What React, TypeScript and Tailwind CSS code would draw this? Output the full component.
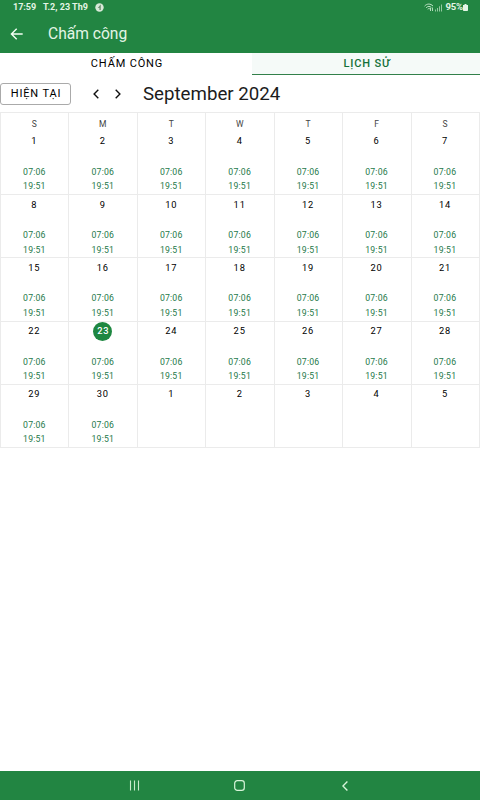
import { useState } from "react";
import clsx from "clsx";

interface Day {
  date: number;
  checkIn?: string;
  checkOut?: string;
  today?: boolean;
}

const weekdays = ["S", "M", "T", "W", "T", "F", "S"];

// 30 days of September followed by the first days of October
const days: Day[] = Array.from({ length: 35 }, (_, i) =>
  i < 30
    ? { date: i + 1, checkIn: "07:06", checkOut: "19:51", today: i === 22 }
    : { date: i - 29 }
);

const weeks = [0, 1, 2, 3, 4].map((w) => days.slice(w * 7, w * 7 + 7));

const StatusBar = () => (
  <div className="flex h-[14px] items-center justify-between pl-[13px] pr-[12px] text-[9px] leading-[14px] font-bold text-[#e4f5e6]">
    <div className="flex items-center">
      <span className="w-[30px] text-[9px]">17:59</span>
      <span className="w-[52px] whitespace-nowrap">T.2, 23 Th9</span>
      <svg width="9" height="9" viewBox="0 0 9 9">
        <circle cx="4.5" cy="4.5" r="4.2" fill="#d8e9d8" />
        <path d="M5.3 1.8 2.8 4.9h1.6v2h1.4V1.8z" fill="#6d8f72" />
      </svg>
    </div>
    <div className="flex items-center">
      <svg width="20" height="9" viewBox="0 0 20 9" fill="none" stroke="#c4e5ca">
        <path d="M.6 3.1C3 .4 6.6.4 9 3.1M2.2 4.7c1.6-1.7 3.8-1.7 5.2 0M3.7 6.2c.8-.8 1.7-.8 2.5 0" />
        <path d="M6.5 8V5M8.5 8V4.5" strokeWidth=".9" />
        <path d="M11.5 8.5V6.5M13.5 8.5V5M15.5 8.5V3.3M17.5 8.5V1.5" opacity=".7" />
      </svg>
      <span className="ml-[1px] text-[9.5px] tracking-[-0.1px]">95%</span>
      <svg width="5" height="7" viewBox="0 0 5 7" fill="#e4f5e6">
        <path d="M1.5 0h2v1H5v5.2a.8.8 0 0 1-.8.8H.8a.8.8 0 0 1-.8-.8V1h1.5z" />
      </svg>
    </div>
  </div>
);

const AppBar = () => (
  <div className="flex h-[39px] items-center pl-[10px] text-[#e4f5e6]">
    <svg width="13" height="12" viewBox="0 0 13 12" fill="none" stroke="#f4fff4" strokeWidth="1.4">
      <path d="M12.7 6H1.5M6.7.7 1.4 6l5.3 5.3" />
    </svg>
    <h1 className="ml-[25px] text-[15.6px] leading-[20px] font-normal">Chấm công</h1>
  </div>
);

const DayCell = ({ day }: { day: Day }) => (
  <div className="flex h-[63px] flex-col items-center">
    <span
      className={clsx(
        "flex h-[19px] w-[19px] items-center justify-center rounded-full text-[9.3px] tracking-[0.8px]",
        day.today ? "bg-[#1e8741] pl-[1px] font-medium text-white" : "text-black"
      )}
    >
      {day.date}
    </span>
    {day.checkIn && (
      <div className="mt-[14px] text-center text-[8.7px] leading-[14.5px] tracking-[0.2px] text-[#25794a]">
        <div>{day.checkIn}</div>
        <div>{day.checkOut}</div>
      </div>
    )}
  </div>
);

const App: React.FC = () => {
  const [activeTab, setActiveTab] = useState<"checkin" | "history">("history");

  return (
    <div className="flex h-[800px] w-[480px] flex-col overflow-hidden bg-white font-[Roboto,sans-serif]">
      <header className="h-[53px] shrink-0 bg-[#228542]">
        <StatusBar />
        <AppBar />
      </header>

      {/* Tabs */}
      <div className="flex h-[22px] shrink-0 text-[11px] tracking-[0.85px]">
        <button
          className={clsx(
            "w-[252px] border-b pt-px pl-[2px]",
            activeTab === "checkin" ? "border-[#32804a] bg-[#f5faf8] text-[#14713a]" : "border-white text-black"
          )}
          onClick={() => setActiveTab("checkin")}
        >
          CHẤM CÔNG
        </button>
        <button
          className={clsx(
            "flex-1 border-b pt-px pl-[2px]",
            activeTab === "history" ? "border-[#32804a] bg-[#f5faf8] font-medium text-[#14713a]" : "border-white text-black"
          )}
          onClick={() => setActiveTab("history")}
        >
          LỊCH SỬ
        </button>
      </div>

      {/* Month toolbar */}
      <div className="flex h-[37px] shrink-0 items-center">
        <button className="h-[22px] w-[71px] rounded-[3px] border border-[#aaa] pl-px text-[11px] leading-[20px] tracking-[0.85px] text-black">
          HIỆN TẠI
        </button>
        <div className="ml-[22px] flex gap-[16px]">
          <svg width="6" height="10" viewBox="0 0 6 10" fill="none" stroke="#111" strokeWidth="1.4">
            <path d="M5.3.8 1.1 5l4.2 4.2" />
          </svg>
          <svg width="6" height="10" viewBox="0 0 6 10" fill="none" stroke="#111" strokeWidth="1.4">
            <path d="M.7.8 4.9 5 .7 9.2" />
          </svg>
        </div>
        <h2 className="ml-[22px] text-[18.7px] leading-[24px] font-normal text-[#1c1c1c]">September 2024</h2>
      </div>

      {/* Calendar */}
      <div className="shrink-0 border-t border-l border-[#ebebeb]">
        {weeks.map((week, w) => (
          <div
            key={w}
            className={clsx(
              "grid grid-cols-7 border-b border-[#ebebeb]",
              w === 0 ? "h-[82px]" : "h-[63.3px]"
            )}
          >
            {week.map((day, i) => (
              <div key={i} className="border-r border-[#ebebeb] pr-[0.7px]">
                {w === 0 && (
                  <div className="flex h-[18.5px] items-start justify-center pt-[4px] text-[8.5px] leading-[14px] text-[#444]">
                    {weekdays[i]}
                  </div>
                )}
                <DayCell day={day} />
              </div>
            ))}
          </div>
        ))}
      </div>

      {/* System navigation */}
      <nav className="mt-auto flex h-[29px] shrink-0 items-center bg-[#228542] pl-[129px]">
        <svg width="11" height="11" viewBox="0 0 11 11" stroke="#c8ebcb" strokeWidth="1.1">
          <path d="M1.5.5v10M5.5.5v10M9.5.5v10" />
        </svg>
        <svg className="ml-[94px]" width="11" height="11" viewBox="0 0 11 11" fill="none" stroke="#d8f5da" strokeWidth="1.2">
          <rect x=".7" y=".7" width="9.6" height="9.6" rx="2.6" />
        </svg>
        <svg className="ml-[97px]" width="6" height="10" viewBox="0 0 6 10" fill="none" stroke="#d8f5da" strokeWidth="1.4">
          <path d="M5.4.5.9 5l4.5 4.5" />
        </svg>
      </nav>
    </div>
  );
};

export default App;
